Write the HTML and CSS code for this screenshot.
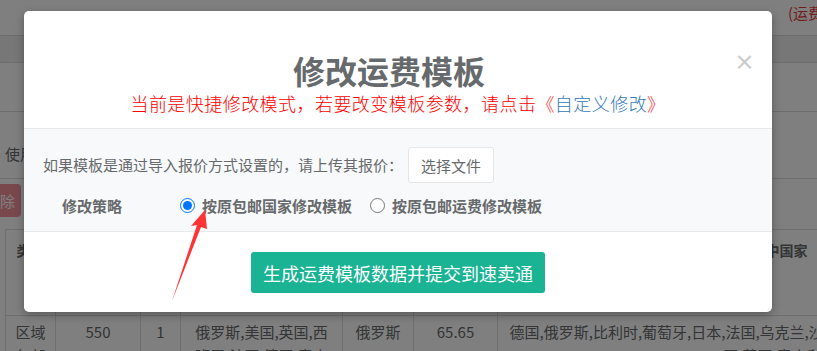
FILE: index.html
```html
<!DOCTYPE html>
<html lang="zh-CN">

<head>
    <meta charset="UTF-8">
    <meta name="viewport" content="width=device-width, initial-scale=1.0">
    <title>修改运费模板</title>
    <link rel="stylesheet" href="styles.css">
</head>

<body>
    <div class="page">
        <div class="topbar"><span class="topbar-note">(运费模板设置说明)</span></div>
        <div class="toolbar"></div>
        <div class="page-row"></div>
        <div class="page-row use-row"><span>使用</span></div>
        <div class="page-row action-row"><button class="btn-delete">除</button></div>
        <table class="tpl-table">
            <colgroup>
                <col style="width:50px">
                <col style="width:85px">
                <col style="width:40px">
                <col style="width:162px">
                <col style="width:71px">
                <col style="width:84px">
                <col style="width:550px">
            </colgroup>
            <thead>
                <tr>
                    <th>类型</th>
                    <th>重量</th>
                    <th>数</th>
                    <th>包邮国家</th>
                    <th>国家</th>
                    <th>运费</th>
                    <th>包含中国家</th>
                </tr>
            </thead>
            <tbody>
                <tr>
                    <td>区域包邮</td>
                    <td>550</td>
                    <td>1</td>
                    <td>俄罗斯,美国,英国,西班牙,法国,德国,意大利</td>
                    <td>俄罗斯</td>
                    <td>65.65</td>
                    <td>德国,俄罗斯,比利时,葡萄牙,日本,法国,乌克兰,沙特阿拉伯,荷兰,西班牙,以色列,美国,英国,意大利</td>
                </tr>
            </tbody>
        </table>
    </div>

    <div class="backdrop"></div>

    <div class="modal">
        <div class="modal-header">
            <span class="modal-close">&times;</span>
            <h1 class="modal-title">修改运费模板</h1>
            <p class="modal-sub">当前是快捷修改模式，若要改变模板参数，请点击<span class="sub-link">《<a href="#">自定义修改</a>》</span></p>
        </div>
        <div class="modal-body">
            <div class="form-row">
                <span class="form-text">如果模板是通过导入报价方式设置的，请上传其报价：</span>
                <button class="btn-file">选择文件</button>
            </div>
            <div class="form-row strategy-row">
                <span class="strategy-label">修改策略</span>
                <label class="radio-item"><input type="radio" name="strategy" checked> 按原包邮国家修改模板</label>
                <label class="radio-item"><input type="radio" name="strategy"> 按原包邮运费修改模板</label>
            </div>
        </div>
        <div class="modal-footer">
            <button class="btn-submit">生成运费模板数据并提交到速卖通</button>
        </div>
    </div>

    <svg class="arrow" viewBox="0 0 817 351" width="817" height="351">
        <polygon points="205,210 191,226 197,225 172,301 201,227 207,229" fill="#ff3333" />
    </svg>
</body>

</html>
```

FILE: styles.css
```css
* {
    margin: 0;
    padding: 0;
    box-sizing: border-box;
}

body {
    width: 817px;
    height: 351px;
    overflow: hidden;
    position: relative;
    background-color: #fff;
    font-family: 'Noto Sans CJK SC', 'Noto Sans', sans-serif;
    color: #676a6c;
}

/* page under the backdrop */
.page {
    width: 817px;
    height: 351px;
    overflow: hidden;
}

.topbar {
    height: 36px;
    padding-left: 788px;
    border-bottom: 1px solid #ddd;
    white-space: nowrap;
}

.topbar-note {
    font-size: 15px;
    line-height: 16px;
    color: #e43b3b;
}

.toolbar {
    height: 27px;
    background-color: #eee;
    border-bottom: 1px solid #ddd;
}

.page-row {
    height: 49px;
    border-bottom: 1px solid #ddd;
}

.use-row {
    height: 67px;
    padding: 32px 0 0 5px;
    font-size: 15px;
    line-height: 20px;
}

.action-row {
    height: 50px;
    padding-top: 5px;
    border-bottom: none;
}

.btn-delete {
    height: 33px;
    padding: 0 6px 0 0;
    border: none;
    border-radius: 0 4px 4px 0;
    background-color: #f3919a;
    color: #fff;
    font-family: inherit;
    font-size: 15px;
}

.tpl-table {
    margin-left: 5px;
    width: 1042px;
    table-layout: fixed;
    border-collapse: collapse;
    font-size: 15px;
    line-height: 20px;
}

.tpl-table th,
.tpl-table td {
    border: 1px solid #ddd;
    text-align: center;
    vertical-align: top;
    padding: 10px 8px;
}

.tpl-table th {
    height: 86px;
    font-size: 14px;
    font-weight: 700;
}

.tpl-table td {
    padding-top: 4px;
    line-height: 24px;
}

.backdrop {
    position: absolute;
    left: 0;
    top: 0;
    width: 817px;
    height: 351px;
    background-color: rgba(0, 0, 0, 0.5);
}

/* modal */
.modal {
    position: absolute;
    left: 24px;
    top: 11px;
    width: 748px;
    background-color: #fff;
    border-radius: 5px;
    box-shadow: 0 3px 10px rgba(0, 0, 0, 0.3);
    overflow: hidden;
}

.modal-header {
    position: relative;
    height: 118px;
    padding: 39px 15px 0;
    border-bottom: 1px solid #e7eaec;
    text-align: center;
}

.modal-close {
    position: absolute;
    right: 17px;
    top: 40px;
    font-size: 21px;
    font-weight: 700;
    line-height: 20px;
    color: #000;
    opacity: 0.2;
}

.modal-title {
    font-size: 32px;
    font-weight: 700;
    line-height: 40px;
    color: #676a6c;
    margin-left: -18px;
}

.modal-sub {
    font-size: 18px;
    font-weight: 300;
    line-height: 24px;
    letter-spacing: 0.45px;
    color: #ff0000;
    margin-top: 1px;
}

.sub-link {
    color: #ff2b2b;
}

.sub-link a {
    color: #337ab7;
    text-decoration: none;
}

.modal-body {
    height: 103px;
    padding: 18px 0 0 19px;
    background-color: #f8f9fb;
    border-bottom: 1px solid #e7eaec;
    font-size: 15px;
}

.form-row {
    display: flex;
    align-items: center;
}

.form-text {
    line-height: 20px;
    color: #676a6c;
}

.btn-file {
    height: 36px;
    margin-left: 5px;
    padding: 0 12px;
    border: 1px solid #e5e6e7;
    border-radius: 3px;
    background-color: #fff;
    color: #676a6c;
    font-family: inherit;
    font-size: 15px;
}

.strategy-row {
    margin-top: 11px;
    height: 22px;
    font-weight: 700;
}

.strategy-label {
    width: 137px;
    padding-left: 19px;
}

.radio-item {
    display: flex;
    align-items: center;
    gap: 7px;
    margin-right: 18px;
}

.radio-item input {
    width: 15px;
    height: 15px;
    margin: 0;
}

.modal-footer {
    height: 80px;
    padding-top: 20px;
    display: flex;
    justify-content: center;
    align-items: flex-start;
}

.btn-submit {
    height: 41px;
    padding: 0 12px;
    border: none;
    border-radius: 3px;
    background-color: #1ab394;
    color: #fff;
    font-family: inherit;
    font-size: 18px;
}

.arrow {
    position: absolute;
    left: 0;
    top: 0;
    pointer-events: none;
}
```
